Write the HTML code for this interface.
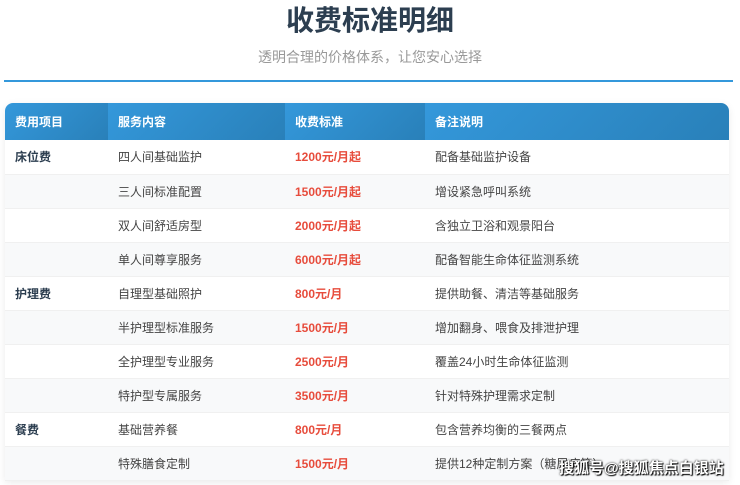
<!DOCTYPE html>
<html><head><meta charset="utf-8"><style>
body{margin:0;width:740px;height:485px;overflow:hidden;background:#fff;font-family:"Liberation Sans","Noto Sans CJK SC",sans-serif;position:relative}
h1{position:absolute;top:3px;left:0;width:740px;text-align:center;margin:0;font-size:28px;font-weight:bold;color:#2c3e50;line-height:36px}
.sub{position:absolute;top:47px;left:0;width:740px;text-align:center;font-size:14px;color:#999;line-height:20px}
.line{position:absolute;top:80px;left:4px;width:729px;height:2px;background:#3498db}
.tbl{position:absolute;top:103px;left:5px;width:724px;border-radius:8px 8px 0 0;overflow:hidden;box-shadow:0 2px 8px rgba(0,0,0,.08)}
table{border-collapse:collapse;width:724px;font-size:12px}
th{height:37px;text-align:left;padding:0 0 0 10px;color:#fff;font-weight:bold;background:linear-gradient(135deg,#3498db,#2980b9)}
td{height:34px;padding:0 0 0 10px;color:#444;border-bottom:1px solid #f0f0f0;box-sizing:border-box}
tr:nth-child(odd) td{background:#f8f9fa}
td.c{font-weight:bold;color:#2c3e50}
td.p{font-weight:bold;color:#e74c3c}
.wm{position:absolute;left:559px;top:457px;font-size:15px;color:#fff;font-weight:bold;text-shadow:0 0 2px #000,1px 1px 1px #000}
</style></head><body>
<h1>收费标准明细</h1>
<div class="sub">透明合理的价格体系，让您安心选择</div>
<div class="line"></div>
<div class="tbl"><table>
<tr><th style="width:93px">费用项目</th><th style="width:167px">服务内容</th><th style="width:130px">收费标准</th><th>备注说明</th></tr>
<tr><td class="c">床位费</td><td>四人间基础监护</td><td class="p">1200元/月起</td><td>配备基础监护设备</td></tr>
<tr><td></td><td>三人间标准配置</td><td class="p">1500元/月起</td><td>增设紧急呼叫系统</td></tr>
<tr><td></td><td>双人间舒适房型</td><td class="p">2000元/月起</td><td>含独立卫浴和观景阳台</td></tr>
<tr><td></td><td>单人间尊享服务</td><td class="p">6000元/月起</td><td>配备智能生命体征监测系统</td></tr>
<tr><td class="c">护理费</td><td>自理型基础照护</td><td class="p">800元/月</td><td>提供助餐、清洁等基础服务</td></tr>
<tr><td></td><td>半护理型标准服务</td><td class="p">1500元/月</td><td>增加翻身、喂食及排泄护理</td></tr>
<tr><td></td><td>全护理型专业服务</td><td class="p">2500元/月</td><td>覆盖24小时生命体征监测</td></tr>
<tr><td></td><td>特护型专属服务</td><td class="p">3500元/月</td><td>针对特殊护理需求定制</td></tr>
<tr><td class="c">餐费</td><td>基础营养餐</td><td class="p">800元/月</td><td>包含营养均衡的三餐两点</td></tr>
<tr><td></td><td>特殊膳食定制</td><td class="p">1500元/月</td><td>提供12种定制方案（糖尿病等）</td></tr>
</table></div>
<div class="wm">搜狐号@搜狐焦点白银站</div>
</body></html>
